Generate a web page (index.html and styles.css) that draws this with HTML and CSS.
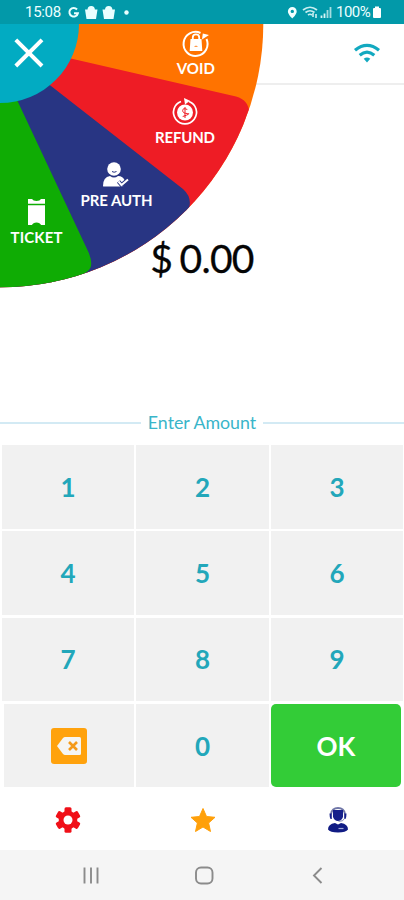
FILE: index.html
```html
<!DOCTYPE html>
<html lang="en">
<head>
<meta charset="utf-8">
<title>Payment terminal</title>
<link rel="stylesheet" href="styles.css">
</head>
<body>
<header class="status">
  <span class="time">15:08</span>
  <svg class="status-left" width="66" height="24" viewBox="0 0 66 24" fill="none">
    <path d="M10 9.500A4.300 4.300 0 1 0 10.900 13.200H7" stroke="#e9ffff" stroke-width="2"/>
    <g fill="#e9ffff"><path d="M18 9.500h12.500l-1.500 9.500H19.500zM35.500 9.500H48l-1.500 9.500H37z"/><path d="M20.500 10q0-4 3.700-4t3.700 4zM38 10q0-4 3.700-4t3.700 4z"/><circle cx="59.500" cy="12.500" r="2.200"/></g>
  </svg>
  <span class="spacer"></span>
  <svg width="50" height="24" viewBox="0 0 50 24" fill="none">
    <path d="M6.300 7a4.400 4.400 0 0 0-4.400 4.400c0 3 4.400 7 4.400 7s4.400-4 4.400-7A4.400 4.400 0 0 0 6.300 7zm0 2.700a1.700 1.700 0 1 1 0 3.400 1.700 1.700 0 0 1 0-3.400z" fill="#f2ffff"/>
    <path d="M17 10q7-5.500 14 0M19.500 12.500q4.500-3.500 9 0M22 15q2-1.500 4 0" stroke="#c9eef0" stroke-width="1.700"/>
    <path d="M27 13v4m3-3v4" stroke="#d9f5f6" stroke-width="1.500"/>
    <path d="M35.500 15.500v2.500M38.500 13.500v4.500" stroke="#d9f5f6" stroke-width="1.800"/><path d="M41.500 10v8M44.500 7v11" stroke="#a5dce0" stroke-width="1.800"/>
  </svg>
  <span class="percent">100%</span>
  <svg width="10" height="24" viewBox="0 0 10 24"><path d="M3 6.500h4V8h1q1 0 1 1v8q0 1-1 1H2q-1 0-1-1V9q0-1 1-1h1z" fill="#fff"/></svg>
</header>
<main class="app">
  <div class="topbar">
    <svg width="28" height="22" viewBox="0 0 28 22" fill="none" stroke="#12a9c0" stroke-width="3.200">
      <path d="M2 8.300Q14-1.500 26 8.300M6.700 13.200Q14 7 21.300 13.200"/><path d="M10.700 16.800Q14 14 17.300 16.800L14 20.500z" fill="#12a9c0" stroke="none"/>
    </svg>
  </div>
  <section class="amount">$ 0.00</section>
  <div class="divider"><span>Enter Amount</span></div>
  <section class="keypad">
    <button>1</button><button>2</button><button>3</button>
    <button>4</button><button>5</button><button>6</button>
    <button>7</button><button>8</button><button>9</button>
    <button class="erase" aria-label="Delete"><svg width="38" height="38" viewBox="0 0 38 38">
      <rect x="1" y="1" width="36" height="36" rx="3" fill="#ffa20d"/><path d="M7 19l6-8q1-1 2-1h14.500q1.500 0 1.500 1.500v15q0 1.500-1.500 1.500H15q-1 0-2-1z" fill="#f5f5f3"/><path d="M19 15l8 8m0-8l-8 8" stroke="#f49a19" stroke-width="2.600"/>
    </svg></button>
    <button>0</button><button class="ok">OK</button>
  </section>
  <nav class="tabs">
    <a><svg width="28" height="28" viewBox="0 0 28 28"><g fill="#f01018"><circle cx="14" cy="14" r="9.300"/><rect x="10.500" y="1.300" width="7" height="25.400" rx="1.500"/><rect x="10.500" y="1.300" width="7" height="25.400" rx="1.500" transform="rotate(60 14 14)"/><rect x="10.500" y="1.300" width="7" height="25.400" rx="1.500" transform="rotate(120 14 14)"/></g><circle cx="14" cy="14" r="4.500" fill="#fff"/></svg></a>
    <a><svg width="28" height="28" viewBox="0 0 28 28"><path d="M14 2.500l3.500 8 8.500.8-6.400 5.700 1.900 8.500L14 21l-7.500 4.500L8.400 17 2 11.300l8.500-.8z" fill="#ffa00a" stroke="#ffa00a" stroke-linejoin="round"/></svg></a>
    <a><svg width="28" height="28" viewBox="0 0 28 28"><path d="M7 8Q8 2 14 2t7 6" fill="none" stroke="#6f76a7" stroke-width="1.800"/><path d="M9 4h10v7q-1.500 4-5 4t-5-4zM5.500 7.500h2.300v5.500H6.500q-1-2-1-5.500zm14.700 0h2.300q0 3.500-1 5.500h-1.300z" fill="#16208a"/><path d="M20.500 12.500q-1 3.200-6 2.800" fill="none" stroke="#8186b3"/><path d="M4 23.500q0-5.500 7-6.500l3 1.500 3-1.500q7 1 7 6.500-2 3-10 3t-10-3z" fill="#101b84"/><path d="M14.500 22.500h5" fill="none" stroke="#a0a8d6" stroke-width="1.200"/></svg></a>
  </nav>
  <svg class="wheel" width="264" height="264" viewBox="0 0 264 264">
    <defs><clipPath id="disc"><path d="M0 0H263.300A263.300 263.300 0 0 1 0 263.300z"/></clipPath></defs>
    <g clip-path="url(#disc)">
      <path d="M0 0H264V264H0z" fill="#ff7300"/>
      <path d="M0 19L73 35 236 72.500Q249 76 249.500 90L264 264H0z" fill="#ee1c25"/>
      <path d="M0 22L51 62 183 165Q193 174 188.500 186L186 264H0z" fill="#283583"/>
      <path d="M0 40L18 78 87 225Q93 237 90.500 243.500Q89 247 84 249.500V264H0z" fill="#0fac04"/>
    </g>
    <path d="M0 0H79A79 79 0 0 1 0 79z" fill="#02abc2"/>
    <path d="M15.800 15.800L42 42m0-26.200L15.800 42" stroke="#fff" stroke-width="4"/>
    <g class="wheel-label"><text x="195.800" y="50" textLength="38">VOID</text><text x="185" y="118.500" textLength="60">REFUND</text><text x="116.500" y="181.500" textLength="72">PRE AUTH</text><text x="36.500" y="218.500" textLength="52">TICKET</text></g>
    <path d="M200.500 9A12 12 0 1 0 206.500 15" fill="none" stroke="#fff" stroke-width="2"/>
    <path d="M192.800 16v-2.500a3.200 3.200 0 0 1 6.400 0V16" fill="none" stroke="#fff" stroke-width="1.800"/>
    <path d="M190.500 15h11l.8 12h-12.600zM202 15.500l.8-6 6.200 1.500z" fill="#fff"/><path d="M194 23q2-3 4 0z" fill="#ff9b4e"/>
    <path d="M189 77.500A11.500 11.500 0 1 1 181 77.500" fill="none" stroke="#fff" stroke-width="1.700"/><path d="M184 74l6 2.800-5 3.700z" fill="#fff"/><circle cx="185" cy="88.500" r="8" fill="#fff"/>
    <path d="M187.300 85.500q-4.600-2-4.600 1t4.600 3-4.600 3M185 83v11" fill="none" stroke="#ee1c25" stroke-width="1"/>
    <circle cx="114" cy="145" r="6.800" fill="#fff"/><path d="M103 162q0-9 7-10 4 3 8 0 5 0 7 5l-2 5.500h-19q-1 0-1-.5z" fill="#fff"/><path d="M112 147.500q2 1.500 4.500 0" fill="none" stroke="#283583"/><path d="M118.500 157.500l3 3.500 6.500-5.500" fill="none" stroke="#283583" stroke-width="4"/><path d="M118.500 157.500l3 3.500 6.500-5.500" fill="none" stroke="#fff" stroke-width="2"/>
    <path d="M28 175h4q1 2 4.500 2t4.500-2h4v4.800H28zM28 181.200h17V201h-4q-1-2.500-4.500-2.500T32 201h-4z" fill="#fff"/>
  </svg>
</main>
<footer class="system-nav">
  <svg width="404" height="50" viewBox="0 0 404 50" fill="none" stroke="#8b8b8b" stroke-width="1.900"><path d="M84.500 17.500v16M91 17.500v16M97.500 17.500v16"/><rect x="196" y="17.500" width="16.500" height="16" rx="5"/><path d="M321.500 18l-7.500 7.500 7.500 7.500"/></svg>
</footer>
</body>
</html>
```
FILE: styles.css
```css
* { box-sizing: border-box; }
body {
  margin: 0;
  width: 404px;
  height: 900px;
  display: flex;
  flex-direction: column;
  overflow: hidden;
  background: #fff;
  font-family: Lato, "Liberation Sans", sans-serif;
}
svg { display: block; flex: none; }
.status {
  height: 24px;
  padding: 0 22px 0 25px;
  display: flex;
  background: #0299a9;
  color: #edffff;
  font: 15px/25px Roboto, sans-serif;
}
.time { width: 37px; letter-spacing: -.3px; }
.status-left { margin-left: 5px; }
.spacer { flex: 1; }
.percent { width: 36px; letter-spacing: -.5px; }
.app {
  position: relative;
  height: 826px;
  display: flex;
  flex-direction: column;
}
.topbar {
  height: 61px;
  border-bottom: 2px solid #eee;
  padding: 18px 23px 0;
  display: flex;
  justify-content: flex-end;
}
.amount {
  height: 326px;
  padding-top: 148px;
  text-align: center;
  font-size: 39px;
  line-height: 50px;
  font-weight: 400;
  color: #050505;
  -webkit-text-stroke: .3px #050505;
  letter-spacing: -.7px;
  word-spacing: -2px;
}
.divider {
  height: 24px;
  display: flex;
  align-items: center;
  gap: 7px;
  color: #39b5c9;
  font-size: 17.800px;
}
.divider span { margin-top: -2px; }
.divider::before, .divider::after {
  content: "";
  flex: 1;
  height: 2px;
  background: #d3eaf4;
}
.keypad {
  height: 344px;
  padding: 10px 1px 0 2px;
  display: grid;
  grid-template-columns: 132px 133px 132px;
  grid-template-rows: repeat(4, 83.500px);
  column-gap: 2px;
  row-gap: 2.800px;
}
.keypad button {
  border: 0;
  padding: 0;
  background: #f1f1f1;
  color: #22a7ba;
  font: 700 26px/30px Lato, sans-serif;
}
.keypad .erase {
  margin-left: 2px;
  display: flex;
  align-items: center;
  justify-content: center;
}
.keypad .ok {
  margin-right: 2px;
  border-radius: 5px;
  background: #33cc37;
  color: #fff;
}
.tabs {
  flex: 1;
  padding-top: 27px;
  display: grid;
  grid-template-columns: repeat(3, 135px);
  justify-items: center;
}
.wheel {
  position: absolute;
  left: 0;
  top: 0;
}
.wheel-label {
  fill: #fff;
  font-size: 15px;
  font-weight: 700;
  text-anchor: middle;
}
.system-nav { height: 50px; background: #f5f5f5; }
```
